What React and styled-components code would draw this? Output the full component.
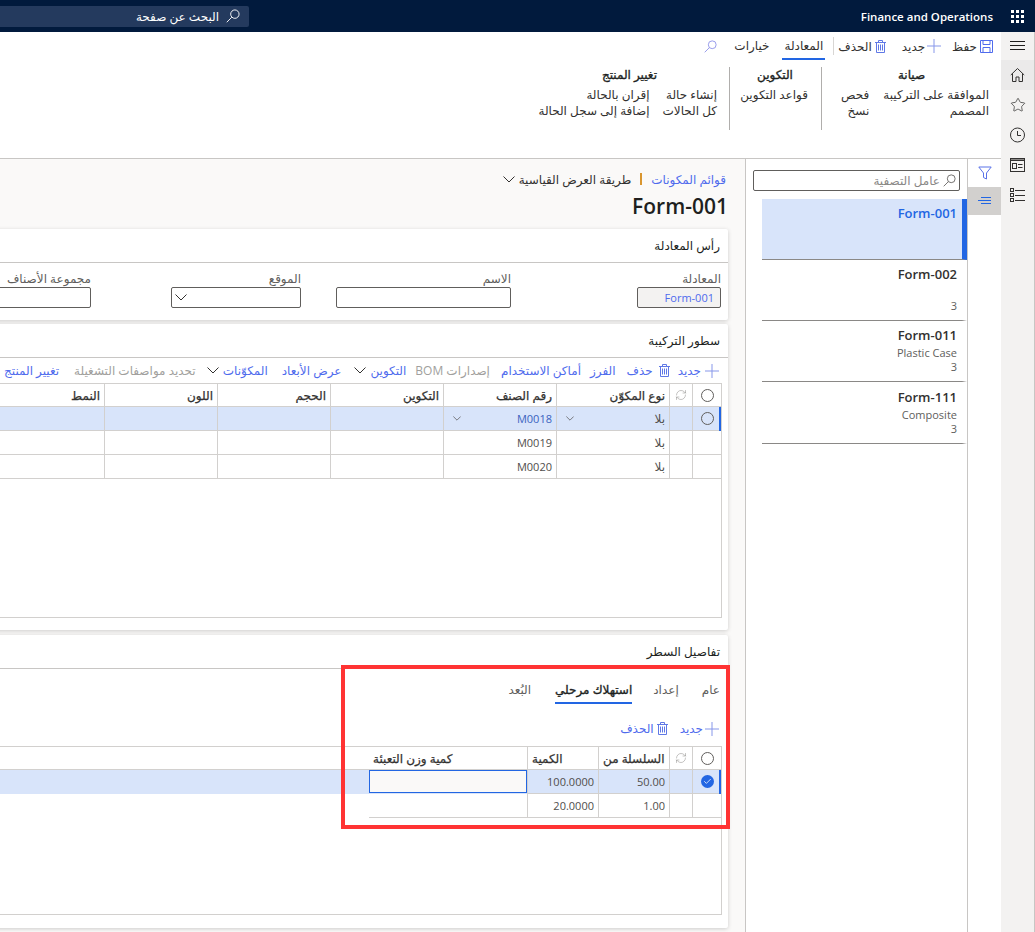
import React from "react";
import styled, { createGlobalStyle, css } from "styled-components";
import { Star, RefreshCw, Check } from "lucide-react";

const GlobalStyle = createGlobalStyle`
  html, body { margin: 0; padding: 0; height: 100%; overflow: hidden; }
  body { font-family: "Open Sans", "DejaVu Sans", sans-serif; font-size: 12px; color: #323130; background: #fff; }
  * { box-sizing: border-box; }
`;

// the arabic face only has one real bold and it is far too wide, so thicken the regular one
const semi = css`
  -webkit-text-stroke: 0.35px currentColor;
`;

const Shell = styled.div`
  width: 1035px;
  height: 932px;
  display: flex;
  flex-direction: column;
  overflow: hidden;
`;

const TopBar = styled.header`
  height: 32px;
  flex: none;
  background: #011a3d;
  display: flex;
  align-items: center;
  justify-content: space-between;
  direction: ltr;
  color: #fff;
`;

const PageSearch = styled.div`
  width: 249px;
  height: 21px;
  background: #243a5e;
  border-radius: 0 2px 2px 0;
  display: flex;
  align-items: center;
  gap: 7px;
  padding-right: 9px;
  font-size: 12px;
  direction: rtl;
`;

const Brand = styled.div`
  display: flex;
  align-items: center;
  gap: 18px;
  padding-right: 11px;
  font-size: 11.5px;
  font-weight: 600;
`;

const Waffle = styled.div`
  display: grid;
  grid-template-columns: repeat(3, 3px);
  gap: 2px;
  i { display: block; width: 3px; height: 3px; background: #fff; }
`;

const Body = styled.div`
  flex: 1;
  display: flex;
  direction: rtl;
  min-height: 0;
`;

const NavRail = styled.nav`
  width: 34px;
  flex: none;
  background: #f3f2f1;
  border-right: 1px solid #c8c6c4;
  display: flex;
  flex-direction: column;
`;

const NavItem = styled.div`
  height: ${(p) => p.$h || 30}px;
  display: flex;
  align-items: center;
  justify-content: center;
  background: ${(p) => (p.$on ? "#ebeaea" : "transparent")};
  color: #323130;
`;

const Main = styled.div`
  flex: 1;
  min-width: 0;
  display: flex;
  flex-direction: column;
`;

const ActionPane = styled.section`
  height: 127px;
  flex: none;
  border-bottom: 1px solid #c8c6c4;
  background: #fff;
  overflow: hidden;
`;

const ActionTabs = styled.div`
  height: 28px;
  display: flex;
  align-items: center;
  padding-right: 8px;
  font-size: 12px;
`;

const ActionBtn = styled.div`
  display: flex;
  align-items: center;
  gap: ${(p) => p.$inner ?? 4}px;
  margin-left: ${(p) => p.$gap || 0}px;
  color: #323130;
  svg { margin-top: ${(p) => (p.$nudge ? 1 : 0)}px; }
`;

const Divider = styled.span`
  width: 1px;
  height: 18px;
  background: #d8d6d4;
  margin-left: 8px;
`;

const ActionTab = styled.div`
  height: 28px;
  padding: 0 2px;
  margin-left: ${(p) => p.$gap || 0}px;
  display: flex;
  align-items: center;
  border-bottom: 2px solid ${(p) => (p.$on ? "#2266e3" : "transparent")};
`;

const Ribbon = styled.div`
  display: flex;
  align-items: flex-start;
  padding-top: 7px;
  margin-right: 12px;
`;

const RibbonGroup = styled.div`
  width: ${(p) => p.$w}px;
  height: 63px;
  padding-right: ${(p) => p.$pad || 0}px;
  border-left: ${(p) => (p.$line ? "1px solid #b0aeac" : "none")};
  flex: none;
`;

const RibbonTitle = styled.div`
  ${semi}
  font-size: 12px;
  line-height: 16px;
  text-align: ${(p) => (p.$inset ? "right" : "center")};
  padding-right: ${(p) => p.$inset || 0}px;
  padding-left: ${(p) => p.$shift || 0}px;
  margin-right: ${(p) => (p.$shift ? -p.$shift : 0)}px;
  color: #201f1e;
  margin-bottom: 4px;
`;

const RibbonCols = styled.div`
  display: flex;
  gap: ${(p) => p.$gap || 13}px;
`;

const RibbonCol = styled.div`
  line-height: 16px;
  font-size: 12px;
  white-space: nowrap;
`;

const Workspace = styled.div`
  flex: 1;
  display: flex;
  min-height: 0;
`;

const FilterStrip = styled.div`
  width: 34px;
  flex: none;
  border-left: 1px solid #c8c6c4;
`;

const StripBtn = styled.div`
  height: 28px;
  display: flex;
  align-items: center;
  justify-content: center;
  background: ${(p) => (p.$on ? "#d2d0ce" : "transparent")};
`;

const ListPane = styled.aside`
  width: 222px;
  flex: none;
  border-left: 1px solid #c8c6c4;
  background: #fff;
`;

const ListFilter = styled.div`
  width: 207px;
  height: 21px;
  margin: 11px 7px 8px 0;
  border: 1px solid #605e5c;
  border-radius: 2px;
  display: flex;
  align-items: center;
  gap: 3px;
  padding-right: 3px;
  color: #8a8886;
  font-size: 12px;
`;

const ListItem = styled.div`
  height: ${(p) => p.$h || 61}px;
  margin-left: 16px;
  padding: ${(p) => (p.$h ? 7 : 6)}px 5px 0 0;
  border-bottom: 1px solid #8a8886;
  border-right: 5px solid ${(p) => (p.$on ? "#2266e3" : "transparent")};
  background: ${(p) => (p.$on ? "#d8e4fa" : "transparent")};
  display: flex;
  flex-direction: column;
`;

const ItemTitle = styled.div`
  font-size: 13px;
  line-height: 16px;
  font-weight: 600;
  direction: ltr;
  text-align: right;
  color: ${(p) => (p.$on ? "#2266e3" : "#323130")};
`;

const ItemLine = styled.div`
  font-size: 11px;
  line-height: 14px;
  color: #605e5c;
  direction: ltr;
  text-align: right;
  margin-top: ${(p) => p.$push || 0}px;
`;

const Content = styled.main`
  flex: 1;
  min-width: 0;
  background: #faf9f8;
  padding-right: 17px;
  overflow: hidden;
`;

const Crumbs = styled.div`
  display: flex;
  align-items: center;
  height: 16px;
  margin-top: 12px;
  padding-right: 2px;
  gap: 9px;
  font-size: 12px;
  white-space: nowrap;
`;

const CrumbLink = styled.span`
  color: #4f6bed;
`;

const CrumbBar = styled.span`
  width: 2px;
  height: 12px;
  background: #d9962f;
`;

const CrumbView = styled.span`
  display: flex;
  align-items: center;
  gap: 4px;
`;

const PageTitle = styled.h1`
  margin: 5px 0 9px;
  font-size: 21px;
  line-height: 28px;
  font-weight: 600;
  color: #201f1e;
  direction: ltr;
  text-align: right;
`;

const Card = styled.section`
  width: 1000px;
  height: ${(p) => p.$h}px;
  margin-bottom: ${(p) => p.$mb || 0}px;
  background: #fff;
  border-radius: 2px;
  box-shadow: 0 1px 4px rgba(0, 0, 0, 0.18);
  position: relative;
`;

const CardHead = styled.div`
  height: ${(p) => p.$h || 34}px;
  padding-right: 8px;
  display: flex;
  align-items: center;
  font-size: 12px;
  color: #201f1e;
  border-bottom: ${(p) => (p.$line === false ? "none" : "1px solid #c8c6c4")};
`;

// the callout hides this rule in the reference, so it stops short of it
const HeadRule = styled.div`
  height: 1px;
  margin-right: 387px;
  background: #c8c6c4;
`;

const Fields = styled.div`
  display: flex;
  padding: 7px 7px 0 0;
`;

const Field = styled.div`
  width: ${(p) => p.$w}px;
  margin-left: ${(p) => p.$gap || 0}px;
  flex: none;
`;

const FieldLabel = styled.div`
  font-size: 12px;
  line-height: 17px;
  color: #605e5c;
`;

const FieldBox = styled.div`
  height: 21px;
  border: 1px solid #605e5c;
  border-radius: 2px;
  background: ${(p) => (p.$ro ? "#f3f2f1" : "#fff")};
  color: #4f6bed;
  display: flex;
  align-items: center;
  justify-content: ${(p) => (p.$end ? "flex-end" : "flex-start")};
  padding: 0 ${(p) => (p.$ro ? 6 : 3)}px;
  font-size: 11px;
  direction: ${(p) => (p.$ro ? "ltr" : "rtl")};
`;

const Toolbar = styled.div`
  height: 25px;
  margin-top: ${(p) => p.$mt || 0}px;
  display: flex;
  align-items: center;
  padding-right: 9px;
  font-size: 12px;
  color: #4f6bed;
  white-space: nowrap;
`;

const ToolBtn = styled.span`
  display: flex;
  align-items: center;
  gap: ${(p) => p.$inner ?? 4}px;
  margin-left: ${(p) => p.$gap ?? 13}px;
  color: ${(p) => (p.$off ? "#a19f9d" : "#4f6bed")};
`;

const GridFrame = styled.div`
  margin-right: 6px;
  margin-top: ${(p) => p.$mt || 0}px;
  height: ${(p) => p.$h}px;
  border-right: 1px solid #d2d0ce;
  border-top: 1px solid #d2d0ce;
  border-bottom: 1px solid #d2d0ce;
`;

const Row = styled.div`
  display: flex;
  height: ${(p) => (p.$head ? 23 : 24)}px;
  background: ${(p) => (p.$on ? "#d8e4fa" : "transparent")};
  position: relative;
  font-size: 12px;
`;

const Cell = styled.div`
  width: ${(p) => p.$w}px;
  flex: none;
  height: 100%;
  padding: 0 4px;
  display: flex;
  align-items: center;
  justify-content: ${(p) => (p.$center ? "center" : p.$num || p.$end ? "flex-end" : "space-between")};
  border-left: ${(p) => (p.$open ? "none" : "1px solid #d2d0ce")};
  border-bottom: 1px solid #d2d0ce;
  ${(p) => p.$head && semi}
  ${(p) => p.$head && "-webkit-text-stroke-width: 0.25px;"}
  font-size: ${(p) => (p.$num || p.$link !== undefined ? 11 : 12)}px;
  color: ${(p) => (p.$link ? "#3a63c0" : p.$head ? "#323130" : "#504e4c")};
  white-space: nowrap;
  direction: ${(p) => (p.$num ? "ltr" : "rtl")};
`;

const HeadFill = styled.div`
  flex: 1;
  border-bottom: 1px solid #d2d0ce;
`;

const RowMark = styled.span`
  position: absolute;
  top: 0;
  right: 0;
  width: 2px;
  height: 24px;
  background: #2266e3;
`;

const Radio = styled.span`
  width: 13px;
  height: 13px;
  border-radius: 50%;
  border: 1px solid #605e5c;
  display: block;
`;

const RadioOn = styled.span`
  width: 13px;
  height: 13px;
  border-radius: 50%;
  background: #2266e3;
  color: #fff;
  display: flex;
  align-items: center;
  justify-content: center;
`;

const CellArrow = styled.span`
  display: flex;
  margin-left: 5px;
  color: #484644;
`;

const EditBox = styled.div`
  width: 158px;
  flex: none;
  height: 23px;
  background: #faf9f8;
  border: 1px solid #2266e3;
`;

const Tabs = styled.div`
  display: flex;
  height: 27px;
  margin-top: 8px;
  padding-right: 8px;
  font-size: 12px;
`;

const Tab = styled.div`
  height: 27px;
  margin-left: ${(p) => p.$gap}px;
  display: flex;
  align-items: center;
  color: ${(p) => (p.$on ? "#201f1e" : "#605e5c")};
  ${(p) => p.$on && semi}
  border-bottom: 2px solid ${(p) => (p.$on ? "#2266e3" : "transparent")};
`;

const Callout = styled.div`
  position: absolute;
  top: 30px;
  right: -2px;
  width: 389px;
  height: 164px;
  border: 4px solid #ff3333;
  pointer-events: none;
`;

const SearchIcon = ({ size = 15, color = "currentColor" }) => (
  <svg width={size} height={size} viewBox="0 0 15 15" fill="none" stroke={color}>
    <circle cx="9.500" cy="5.500" r="4.500" />
    <path d="M6.200 8.800 0.800 14.200" />
  </svg>
);

const PlusIcon = () => (
  <svg width="14" height="14" viewBox="0 0 14 14" fill="none" stroke="#8797ea">
    <path d="M7 0v14M0 7h14" />
  </svg>
);

const BinIcon = () => (
  <svg width="11" height="13" viewBox="0 0 11 13" fill="none" stroke="#5f78e6">
    <path d="M0 2.500h11M3.500 2.500V0.500h4v2M1.500 2.500V12.500h8V2.500" />
    <path d="M3.500 4.500v6M5.500 4.500v6M7.500 4.500v6" />
  </svg>
);

const SaveIcon = () => (
  <svg width="13" height="13" viewBox="0 0 13 13" fill="none" stroke="#4f6bed">
    <path d="M0.500 0.500h12v12h-12z" />
    <path d="M3 0.500v4h7v-4M3 12.500v-5h7v5" />
  </svg>
);

const Chevron = ({ w = 12, color = "currentColor" }) => (
  <svg width={w} height={Math.round(w * 0.6)} viewBox="0 0 12 7" fill="none" stroke={color}>
    <path d="M0.500 0.500 6 6 11.500 0.500" />
  </svg>
);

const MenuIcon = () => (
  <svg width="15" height="10" viewBox="0 0 15 10" fill="none" stroke="#201f1e">
    <path d="M0 0.500h15M0 4.500h15M0 8.500h15" />
  </svg>
);

const HomeIcon = () => (
  <svg width="15" height="16" viewBox="0 0 15 16" fill="none" stroke="#323130">
    <path d="M0.800 8 7.500 1.500 14.200 8" />
    <path d="M2.500 6.500v8h3.500V10h3v4.500h3.500V6.500" />
  </svg>
);

const ClockIcon = () => (
  <svg width="15" height="16" viewBox="0 0 15 16" fill="none" stroke="#323130">
    <circle cx="7.500" cy="8" r="7" />
    <path d="M7.500 4v4.500h3.500" />
  </svg>
);

const Workspaces = () => (
  <svg width="15" height="14" viewBox="0 0 15 14" fill="none" stroke="#323130">
    <rect x="0.500" y="0.500" width="14" height="13" />
    <rect x="0.500" y="0.500" width="14" height="2" fill="#8a8886" />
    <rect x="2.500" y="5.500" width="4" height="5" />
    <path d="M8 6.500h4.500M8 9.500h4.500" />
  </svg>
);

const Modules = () => (
  <svg width="15" height="14" viewBox="0 0 15 14" fill="none" stroke="#323130">
    <rect x="0.500" y="0.500" width="3" height="3" />
    <rect x="0.500" y="5.500" width="3" height="3" />
    <rect x="0.500" y="10.500" width="3" height="3" />
    <path d="M5 2.500h10M5 7.500h10M5 12.500h10" />
  </svg>
);

const FunnelIcon = () => (
  <svg width="14" height="14" viewBox="0 0 14 14" fill="none" stroke="#5a72e8">
    <path d="M0.800 1h12.400L8.500 7v6l-3-1.500V7z" />
  </svg>
);

const ListIcon = () => (
  <svg width="13" height="10" viewBox="0 0 13 10" fill="none" stroke="#2266e3">
    <path d="M3 1.500h10M0 4.500h13M3 7.500h10" />
  </svg>
);

const bomCols = ["نوع المكوّن", "رقم الصنف", "التكوين", "الحجم", "اللون", "النمط"];
const bomRows = [
  ["بلا", "M0018", true],
  ["بلا", "M0019", false],
  ["بلا", "M0020", false],
];

const SyncIcon = () => <RefreshCw size={12} strokeWidth={1} color="#8a8886" />;

export default function App() {
  return (
    <Shell>
      <GlobalStyle />
      <TopBar>
        <PageSearch>
          <SearchIcon size={14} color="#fff" />
          <span>البحث عن صفحة</span>
        </PageSearch>
        <Brand>
          <span>Finance and Operations</span>
          <Waffle>{Array.from({ length: 9 }).map((_, i) => <i key={i} />)}</Waffle>
        </Brand>
      </TopBar>
      <Body>
        <NavRail>
          <NavItem $h={28}><MenuIcon /></NavItem>
          <NavItem $on><HomeIcon /></NavItem>
          <NavItem><Star size={16} strokeWidth={1.1} /></NavItem>
          <NavItem><ClockIcon /></NavItem>
          <NavItem><Workspaces /></NavItem>
          <NavItem><Modules /></NavItem>
        </NavRail>
        <Main>
          <ActionPane>
            <ActionTabs>
              <ActionBtn $gap={11} $inner={3} $nudge><SaveIcon />حفظ</ActionBtn>
              <ActionBtn $gap={16} $inner={2}><PlusIcon />جديد</ActionBtn>
              <ActionBtn $gap={4} $inner={3} $nudge><BinIcon />الحذف</ActionBtn>
              <Divider />
              <ActionTab $gap={11} $on>المعادلة</ActionTab>
              <ActionTab $gap={15}>خيارات</ActionTab>
              <SearchIcon size={13} color="#8a8ee8" />
            </ActionTabs>
            <Ribbon>
              <RibbonGroup $w={168} $line>
                <RibbonTitle $shift={6}>صيانة</RibbonTitle>
                <RibbonCols $gap={14}>
                  <RibbonCol>الموافقة على التركيبة<br />المصمم</RibbonCol>
                  <RibbonCol>فحص<br />نسخ</RibbonCol>
                </RibbonCols>
              </RibbonGroup>
              <RibbonGroup $w={92} $line $pad={13}>
                <RibbonTitle $shift={6}>التكوين</RibbonTitle>
                <RibbonCol>قواعد التكوين</RibbonCol>
              </RibbonGroup>
              <RibbonGroup $w={200} $pad={12}>
                <RibbonTitle $inset={60}>تغيير المنتج</RibbonTitle>
                <RibbonCols>
                  <RibbonCol>إنشاء حالة<br />كل الحالات</RibbonCol>
                  <RibbonCol>إقران بالحالة<br />إضافة إلى سجل الحالة</RibbonCol>
                </RibbonCols>
              </RibbonGroup>
            </Ribbon>
          </ActionPane>
          <Workspace>
            <FilterStrip>
              <StripBtn><FunnelIcon /></StripBtn>
              <StripBtn $on><ListIcon /></StripBtn>
            </FilterStrip>
            <ListPane>
              <ListFilter>
                <SearchIcon size={13} color="#605e5c" />
                عامل التصفية
              </ListFilter>
              <ListItem $on><ItemTitle $on>Form-001</ItemTitle></ListItem>
              <ListItem><ItemTitle>Form-002</ItemTitle><ItemLine $push={17}>3</ItemLine></ListItem>
              <ListItem><ItemTitle>Form-011</ItemTitle><ItemLine $push={3}>Plastic Case</ItemLine><ItemLine>3</ItemLine></ListItem>
              <ListItem $h={62}><ItemTitle>Form-111</ItemTitle><ItemLine $push={3}>Composite</ItemLine><ItemLine>3</ItemLine></ListItem>
            </ListPane>
            <Content>
              <Crumbs>
                <CrumbLink>قوائم المكونات</CrumbLink>
                <CrumbBar />
                <CrumbView>طريقة العرض القياسية <Chevron /></CrumbView>
              </Crumbs>
              <PageTitle>Form-001</PageTitle>

              <Card $h={91} $mb={4}>
                <CardHead>رأس المعادلة</CardHead>
                <Fields>
                  <Field $w={84} $gap={126}>
                    <FieldLabel>المعادلة</FieldLabel>
                    <FieldBox $ro $end>Form-001</FieldBox>
                  </Field>
                  <Field $w={175} $gap={35}>
                    <FieldLabel>الاسم</FieldLabel>
                    <FieldBox />
                  </Field>
                  <Field $w={130} $gap={80}>
                    <FieldLabel>الموقع</FieldLabel>
                    <FieldBox $end><Chevron color="#323130" /></FieldBox>
                  </Field>
                  <Field $w={130}>
                    <FieldLabel>مجموعة الأصناف</FieldLabel>
                    <FieldBox />
                  </Field>
                </Fields>
              </Card>

              <Card $h={306} $mb={5}>
                <CardHead>سطور التركيبة</CardHead>
                <Toolbar>
                  <ToolBtn $gap={8}><PlusIcon />جديد</ToolBtn>
                  <ToolBtn $gap={11} $inner={6}><BinIcon />حذف</ToolBtn>
                  <ToolBtn $gap={9}>الفرز</ToolBtn>
                  <ToolBtn $gap={11}>أماكن الاستخدام</ToolBtn>
                  <ToolBtn $gap={9} $off>إصدارات BOM</ToolBtn>
                  <ToolBtn>التكوين <Chevron color="#323130" /></ToolBtn>
                  <ToolBtn $gap={14}>عرض الأبعاد</ToolBtn>
                  <ToolBtn $gap={11}>المكوّنات <Chevron color="#323130" /></ToolBtn>
                  <ToolBtn $gap={15} $off>تحديد مواصفات التشغيلة</ToolBtn>
                  <ToolBtn>تغيير المنتج</ToolBtn>
                </Toolbar>
                <GridFrame $h={235}>
                  <Row $head>
                    <Cell $w={29} $center><Radio /></Cell>
                    <Cell $w={23} $center><SyncIcon /></Cell>
                    {bomCols.map((t) => <Cell key={t} $w={113} $head>{t}</Cell>)}
                  </Row>
                  {bomRows.map(([a, b, on]) => (
                    <Row key={b} $on={on}>
                      {on && <RowMark />}
                      <Cell $w={29} $center>{on && <Radio />}</Cell>
                      <Cell $w={23} />
                      <Cell $w={113}>{a}{on && <CellArrow><Chevron w={8} /></CellArrow>}</Cell>
                      <Cell $w={113} $link={on}>{b}{on && <CellArrow><Chevron w={8} /></CellArrow>}</Cell>
                      <Cell $w={113} /><Cell $w={113} /><Cell $w={113} /><Cell $w={113} />
                    </Row>
                  ))}
                </GridFrame>
              </Card>

              <Card $h={293}>
                <CardHead $h={33} $line={false}>تفاصيل السطر</CardHead>
                <HeadRule />
                <Tabs>
                  <Tab $gap={23}>عام</Tab>
                  <Tab $gap={21}>إعداد</Tab>
                  <Tab $gap={24} $on>استهلاك مرحلي</Tab>
                  <Tab $gap={0}>البُعد</Tab>
                </Tabs>
                <Toolbar $mt={12}>
                  <ToolBtn $gap={12} $inner={2}><PlusIcon />جديد</ToolBtn>
                  <ToolBtn $inner={3}><BinIcon />الحذف</ToolBtn>
                </Toolbar>
                <GridFrame $h={169} $mt={5}>
                  <Row $head>
                    <Cell $w={29} $center><Radio /></Cell>
                    <Cell $w={23} $center><SyncIcon /></Cell>
                    <Cell $w={71} $head $end>السلسلة من</Cell>
                    <Cell $w={71} $head $end>الكمية</Cell>
                    <Cell $w={158} $head $end $open>كمية وزن التعبئة</Cell>
                    <HeadFill />
                  </Row>
                  <Row $on>
                    <RowMark />
                    <Cell $w={29} $center><RadioOn><Check size={9} strokeWidth={2} /></RadioOn></Cell>
                    <Cell $w={23} />
                    <Cell $w={71} $num>50.00</Cell>
                    <Cell $w={71} $num>100.0000</Cell>
                    <EditBox />
                  </Row>
                  <Row>
                    <Cell $w={29} />
                    <Cell $w={23} />
                    <Cell $w={71} $num>1.00</Cell>
                    <Cell $w={71} $num>20.0000</Cell>
                    <Cell $w={158} $open />
                  </Row>
                </GridFrame>
                <Callout />
              </Card>
            </Content>
          </Workspace>
        </Main>
      </Body>
    </Shell>
  );
}
